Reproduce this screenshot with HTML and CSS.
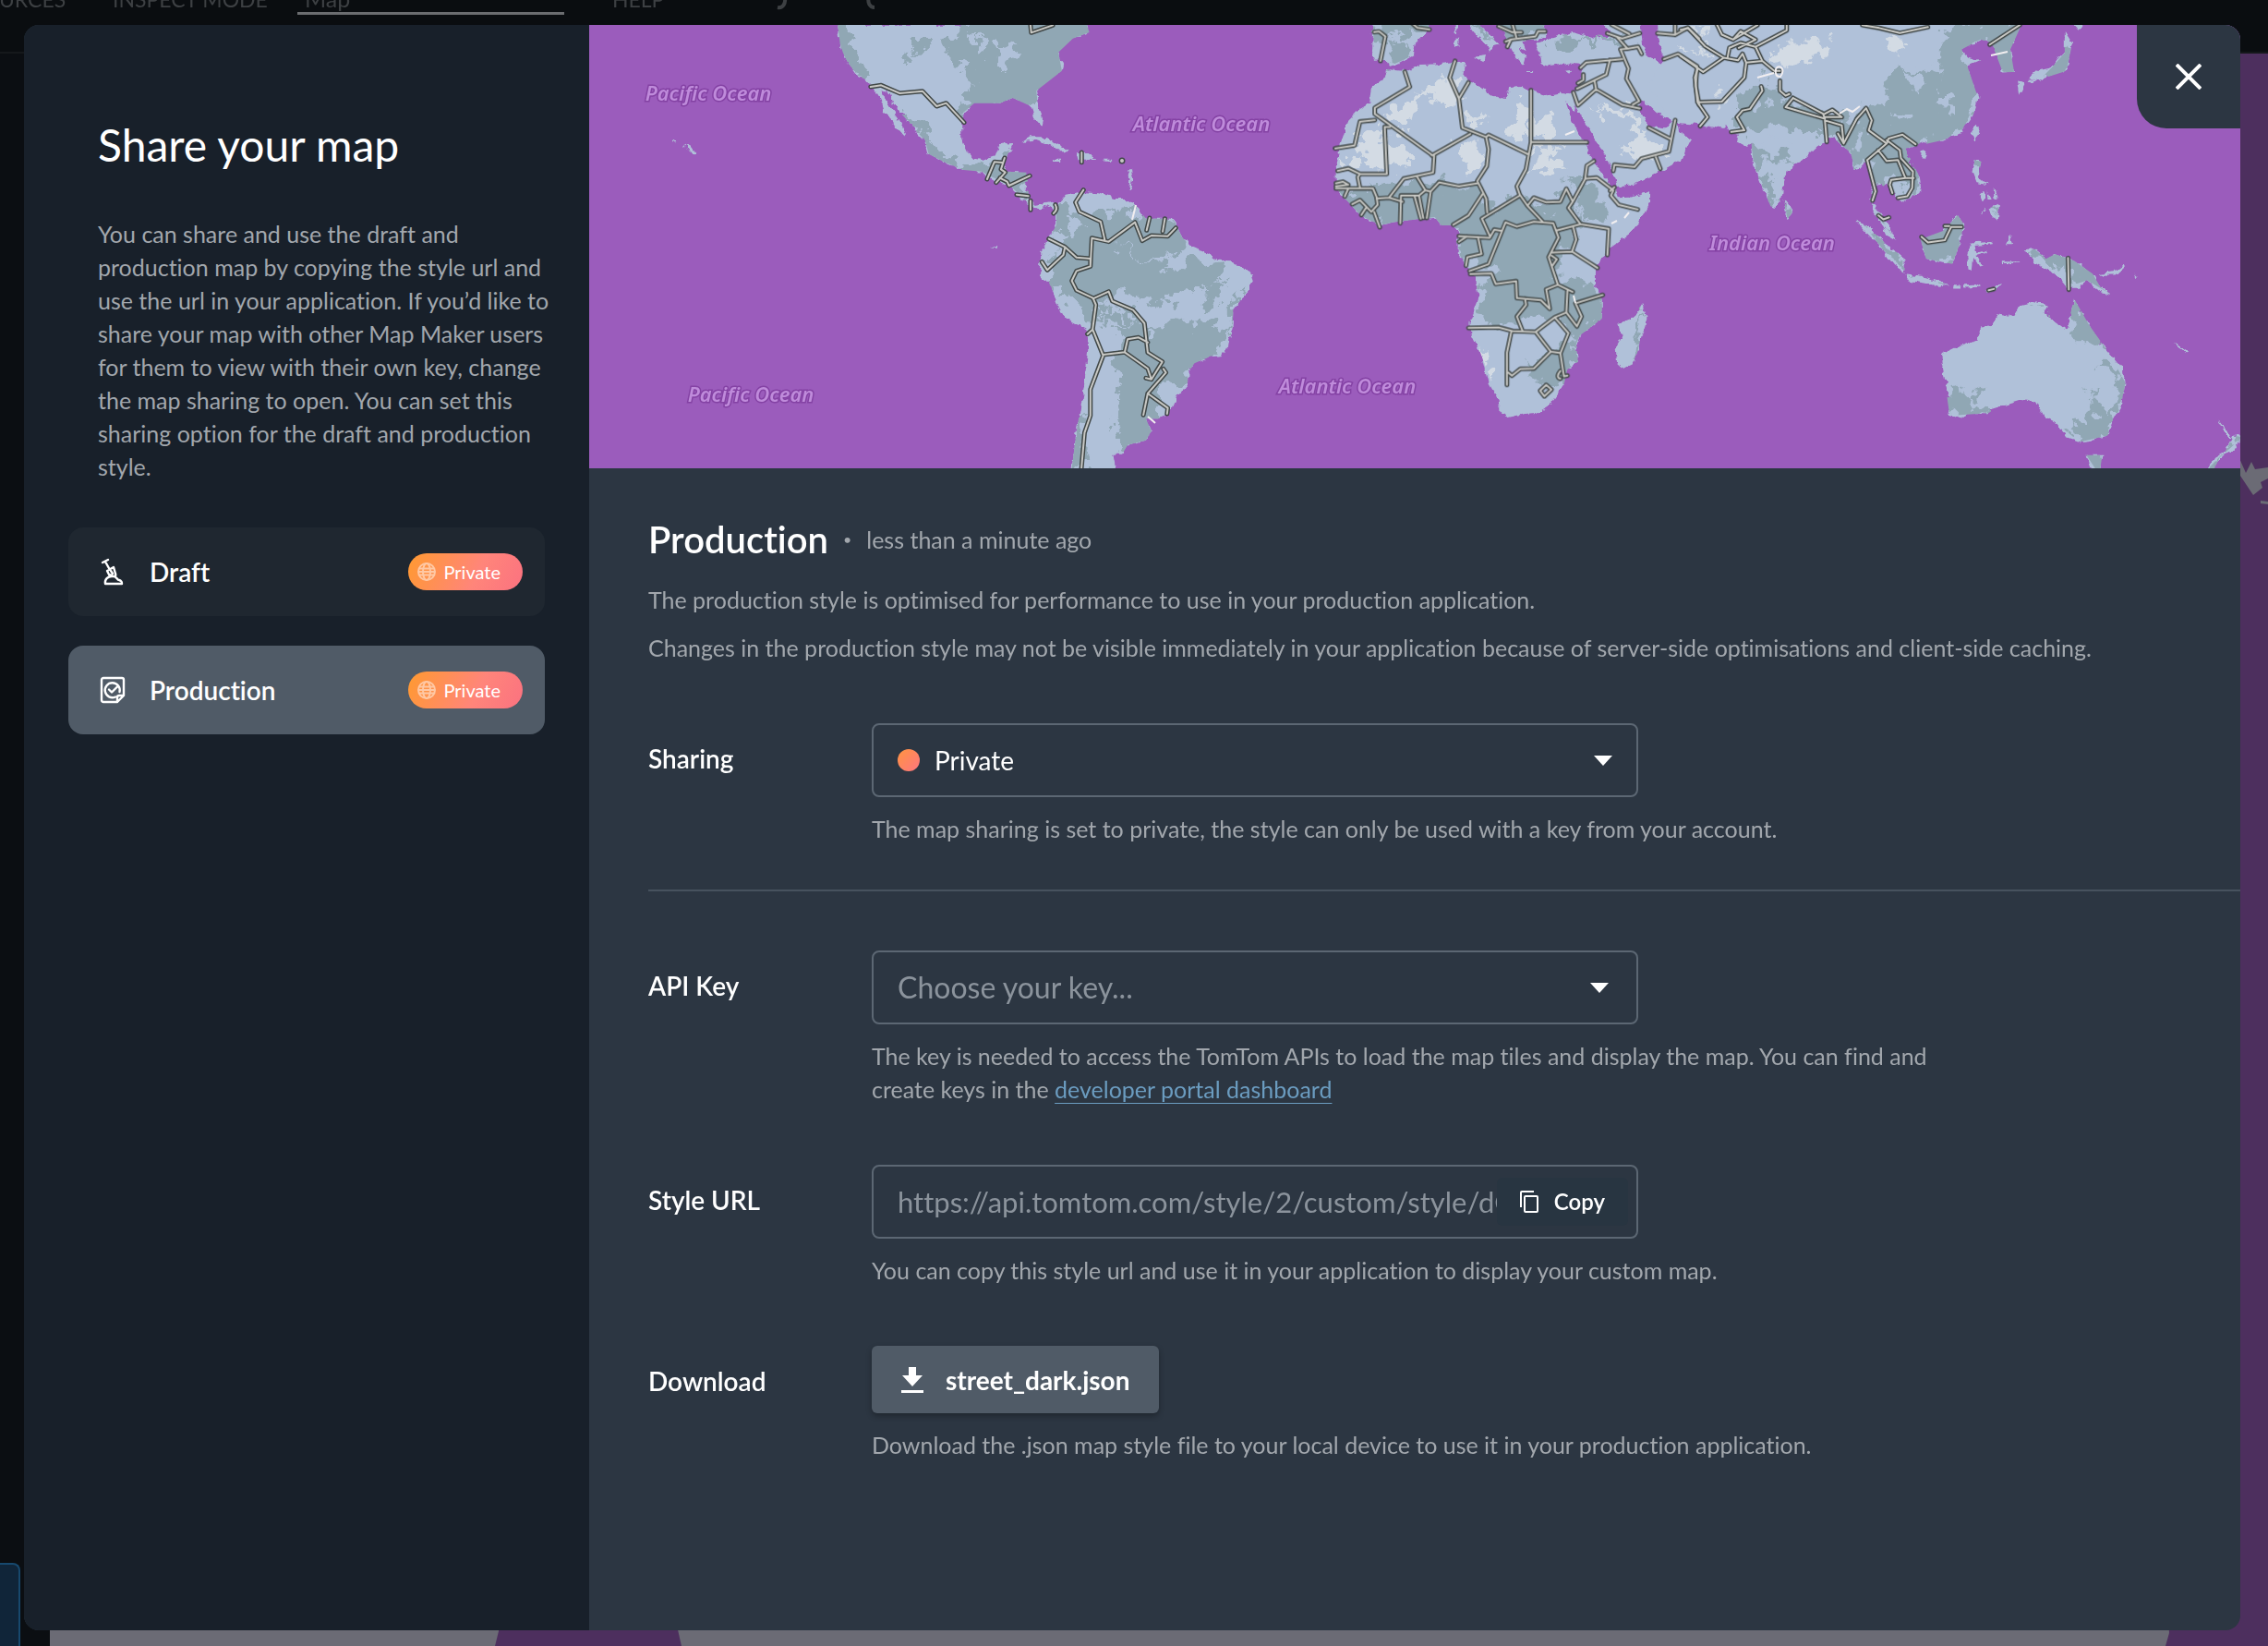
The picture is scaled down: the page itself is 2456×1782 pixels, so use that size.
FILE: index.html
```html
<!DOCTYPE html>
<html lang="en">
<head>
<meta charset="utf-8">
<meta name="viewport" content="width=device-width, initial-scale=1">
<title>Share your map</title>
<link rel="stylesheet" href="styles.css">
</head>
<body>
<div class="app" aria-hidden="true">
  <div class="app-bar">
    <span class="app-item">SOURCES</span>
    <span class="app-item">INSPECT MODE</span>
    <span class="app-search">Map</span>
    <span class="app-item">HELP</span>
    <svg class="app-arrows" width="110" height="24" viewBox="0 0 110 24"><path d="M1 21c6 1 9-4 8-12M100 10c-2 6 1 11 6 11" fill="none" stroke="currentColor" stroke-width="4"/></svg>
  </div>
  <div class="app-body">
    <div class="app-side"><div class="app-tile"></div></div>
    <svg class="app-map" viewBox="54 58 2402 1724" preserveAspectRatio="none">
      <path class="dim-land" d="M54 1700H540V1766L536 1782H54ZM733 1700H2346L2349 1768 2345 1782H738L733 1760Z"/>
      <path class="dim-land" d="M2424 494l8 18 6-12 4 8 14-2v12l-8 4 2 6-10 8-16-24zM2448 542l8 1v3l-8-1z"/>
    </svg>
  </div>
</div>

<div class="overlay">
  <div class="modal" role="dialog" aria-modal="true" aria-labelledby="dialog-title">
    <aside class="sidebar">
      <div class="intro">
        <h1 id="dialog-title">Share your map</h1>
        <p>You can share and use the draft and production map by copying the style url and use the url in your application. If you’d like to share your map with other Map Maker users for them to view with their own key, change the map sharing to open. You can set this sharing option for the draft and production style.</p>
      </div>
      <div class="styles-list">
        <button type="button" class="style-card">
          <svg class="style-icon" viewBox="0 0 28 30"><path d="M3 5l6-3M6 4l5 9M8 14l7-4 2 7c1 3-1 4-4 2l-3-1zM6 28c-1-5 3-8 7-8 6-1 5 4 8 4 3 1 3 2 3 4zM12 14l2 3" /></svg>
          <span class="style-name">Draft</span>
          <span class="badge"><svg viewBox="0 0 20 20"><circle cx="10" cy="10" r="9"/><ellipse cx="10" cy="10" rx="4" ry="9"/><path d="M2 6.500h16M2 13.500h16M1 10h18"/></svg>Private</span>
        </button>
        <button type="button" class="style-card is-active" aria-pressed="true">
          <svg class="style-icon" viewBox="0 0 28 30"><path d="M19 28H4a2 2 0 0 1-2-2V4a2 2 0 0 1 2-2h20a2 2 0 0 1 2 2v17zM19 28v-5a2 2 0 0 1 2-2h5M17 22.500A8 8 0 1 1 21.500 17M10 14.500l3 3 6-6"/></svg>
          <span class="style-name">Production</span>
          <span class="badge"><svg viewBox="0 0 20 20"><circle cx="10" cy="10" r="9"/><ellipse cx="10" cy="10" rx="4" ry="9"/><path d="M2 6.500h16M2 13.500h16M1 10h18"/></svg>Private</span>
        </button>
      </div>
    </aside>

    <main class="content">
      <svg class="preview" viewBox="638 27 1788 480" preserveAspectRatio="xMidYMid slice" role="img" aria-label="Map preview">
        <defs>
          <filter id="rough" x="0" y="0" width="1" height="1"><feTurbulence type="fractalNoise" baseFrequency="0.12" numOctaves="3" seed="4"/><feDisplacementMap in="SourceGraphic" scale="7" xChannelSelector="R" yChannelSelector="G"/></filter>
          <filter id="patchy" x="0" y="0" width="1" height="1"><feTurbulence type="fractalNoise" baseFrequency="0.07" numOctaves="4" seed="9"/><feDisplacementMap in="SourceGraphic" scale="34" xChannelSelector="R" yChannelSelector="G"/></filter>
          <g id="land-shapes">
            <g transform="translate(636 20) scale(.39535 .33333)">
              <path d="M686 20L692 80 700 110 712 140 740 185 765 200 785 230 800 260 812 300 830 320 845 350 870 383 875 375 855 330 830 290 812 250 808 235 830 245 838 275 860 310 880 335 900 365 925 395 935 440 975 465 1030 492 1080 497 1100 520 1130 530 1160 545 1180 580 1215 608 1240 625 1255 608 1285 630 1290 605 1265 598 1230 605 1210 590 1200 560 1205 500 1150 497 1140 480 1150 440 1162 408 1125 412 1115 445 1080 460 1060 455 1040 430 1025 390 1025 340 1030 305 1060 275 1100 268 1130 275 1165 258 1200 268 1215 285 1225 325 1243 347 1247 325 1235 290 1230 235 1265 195 1300 170 1303 150 1290 110 1295 85 1330 65 1375 45 1368 20Z"/>
              <path d="M1192 400L1215 382 1240 382 1275 400 1320 430 1290 430 1265 408 1230 393ZM1340 435L1370 435 1395 455 1345 460ZM1415 458h22v6h-22ZM1275 458h18v7h-18ZM1480 490l10 0 3 30-6 35-5-2 4-30ZM262 410l20 5 16 25-8 2-12-18ZM234 398h9v5h-9ZM1103 746l20-6v6Z"/>
              <path d="M1285 610L1310 575 1355 565 1400 568 1440 585 1470 585 1510 615 1530 650 1605 650 1629 710 1653 740 1702 765 1726 785 1765 787 1794 810 1815 822 1823 850 1815 885 1789 915 1769 945 1767 1010 1755 1060 1736 1095 1702 1100 1663 1120 1646 1150 1644 1185 1619 1220 1600 1270 1566 1300 1530 1300 1545 1340 1530 1370 1480 1385 1465 1415 1440 1415 1450 1480 1325 1480 1340 1340 1360 1200 1375 1040 1365 1010 1310 975 1290 930 1270 870 1240 830 1240 760 1265 715 1285 670Z"/>
            </g>
            <g transform="translate(1240 20) scale(.3827 .33333)">
              <path d="M685 165L740 172 780 150 830 148 880 140 905 145 900 180 912 205 950 225 990 255 1022 258 1030 225 1065 222 1090 235 1140 250 1180 240 1212 245 1218 280 1215 300 1190 270 1205 320 1225 370 1250 410 1252 440 1275 475 1310 530 1330 550 1340 580 1370 578 1432 562 1432 590 1400 660 1370 700 1310 750 1275 810 1275 870 1293 910 1293 975 1230 1030 1220 1055 1225 1115 1195 1140 1185 1190 1150 1250 1110 1280 1070 1285 1022 1297 1002 1275 1000 1240 970 1180 950 1090 925 1030 918 990 943 915 935 840 905 800 885 760 885 690 870 672 838 672 820 645 790 648 700 662 665 672 610 640 570 590 540 550 540 490 550 420 575 330 600 300 635 275 640 225 680 190Z"/>
              <path d="M1410 928L1420 975 1405 1030 1385 1120 1355 1137 1335 1115 1332 1075 1348 1040 1342 990 1375 975 1395 955Z"/>
              <path d="M645 0L800 0 805 35 765 80 760 120 720 145 690 155 680 135 648 137 640 110ZM877 20l9 0-3 35-6-5ZM875 65h12v30h-12ZM905 0L945 20 990 70 1003 85 985 90 975 110 970 90 940 60ZM930 125L962 120 958 142ZM1045 125L1075 130 1070 150ZM1188 173l20-3-8 12ZM1075 168h20v5h-20ZM990 0L1130 0 1135 60 1110 70 1070 75 1078 105 1060 95 1078 130 1050 130 1035 95 1020 60Z"/>
              <path d="M1105 80L1150 65 1210 45 1270 65 1330 58 1300 20 1320 0 1400 0 1405 50 1410 100 1420 120 1470 150 1568 165 1640 200 1640 360 1568 345 1500 330 1450 310 1410 265 1395 268 1400 295 1425 350 1470 358 1500 325 1510 365 1545 395 1520 455 1450 500 1380 540 1335 550 1325 500 1290 420 1260 370 1220 290 1212 240 1235 200 1235 150 1200 145 1150 155 1120 145 1115 110Z"/>
            </g>
            <g transform="translate(1820 0) scale(.40568 .35714)">
              <path d="M-62 50L-60 110 -45 190 -90 260 -20 372 50 378 115 375 130 400 155 405 150 430 175 445 188 430 195 500 215 560 240 625 250 630 270 600 280 520 320 490 365 440 405 415 430 440 455 465 462 515 480 510 500 485 515 560 505 610 535 650 560 690 575 730 550 715 530 670 510 630 520 560 540 555 560 570 590 615 640 580 635 530 600 480 600 450 650 430 700 425 750 400 780 350 795 300 780 250 765 200 800 182 765 170 750 150 800 120 830 130 850 165 860 220 890 218 880 150 890 110 920 50Z"/>
              <path d="M1025 95L1045 130 1030 215 990 225 960 240 930 235 950 215 990 205 1005 180 1025 160ZM1030 50L1080 50 1060 90ZM900 245L920 250 905 285ZM930 240L955 238 940 252ZM790 380L797 390 785 425 778 405ZM640 460L658 455 650 485 638 475ZM785 485L802 490 795 535 820 560 790 555 778 520ZM800 590l10-10 5 20-10 5ZM820 580l10 25-8 0ZM835 570l10 30-8 5ZM825 630L850 620 848 665 830 655ZM800 650l12-20 3 5ZM275 605L300 640 285 665 280 640Z"/>
              <path d="M468 670L500 685 550 740 598 785 598 825 570 805 530 745 500 710ZM600 832L650 840 715 862 690 867 610 850ZM640 725L660 735 700 700 720 680 740 652 755 680 745 740 725 800 690 795 655 785ZM725 866l20 0 0 6-20 0ZM755 866l45-2 0 6-45 2ZM815 885l40-25 0 8-35 22ZM768 820L765 775 775 738 830 733 830 740 785 745 790 765 815 760 812 768 790 775 805 805 797 808 782 780 778 822ZM870 740L880 712 885 740ZM855 793l50 0 0 5-50 0ZM920 760L945 755 975 785 1000 770 1050 790 1100 830 1120 870 1150 893 1120 885 1085 850 1060 870 1030 870 1000 830 950 800 940 780ZM1115 828L1155 824 1180 803 1183 810 1160 833 1115 834ZM1320 1038l36 28-2 5-32-26ZM1210 830l8 8-4 2Z"/>
              <path d="M695 1075L740 1050 790 1030 805 990 835 985 845 950 890 960 905 925 940 915 980 925 970 950 1030 1000 1045 950 1050 905 1070 950 1090 985 1105 1025 1140 1065 1180 1120 1187 1160 1175 1230 1150 1280 1140 1320 1100 1335 1065 1340 1030 1325 1005 1285 970 1265 950 1220 905 1212 825 1240 820 1252 775 1252 750 1270 718 1260 722 1220 705 1150 697 1100ZM1083 1380L1125 1380 1118 1440 1095 1420ZM1475 1320L1500 1325 1480 1360 1440 1385 1420 1430 1400 1430 1425 1385 1455 1365ZM1436 1272l20 28 14 30-8 0Z"/>
            </g>
          </g>
          <clipPath id="land-clip">
            <path transform="translate(636 20) scale(.39535 .33333)" d="M686 20L692 80 700 110 712 140 740 185 765 200 838 275 860 310 880 335 900 365 925 395 935 440 975 465 1030 492 1080 497 1160 545 1215 608 1240 625 1290 605 1210 590 1205 500 1150 497 1140 480 1162 408 1125 412 1115 445 1060 455 1025 390 1030 305 1060 275 1130 275 1165 258 1215 285 1235 290 1230 235 1300 170 1290 110 1330 65 1375 45 1368 20ZM1285 610L1310 575 1355 565 1400 568 1440 585 1470 585 1510 615 1530 650 1605 650 1629 710 1653 740 1702 765 1726 785 1765 787 1815 822 1823 850 1815 885 1789 915 1769 945 1767 1010 1755 1060 1736 1095 1702 1100 1663 1120 1646 1150 1644 1185 1619 1220 1600 1270 1566 1300 1530 1300 1545 1340 1530 1370 1480 1385 1465 1415 1440 1415 1450 1480 1325 1480 1340 1340 1360 1200 1375 1040 1365 1010 1310 975 1290 930 1270 870 1240 830 1240 760 1265 715 1285 670Z"/>
            <path transform="translate(1240 20) scale(.3827 .33333)" d="M685 165L780 150 880 140 905 145 900 180 912 205 950 225 990 255 1022 258 1030 225 1065 222 1140 250 1212 245 1190 270 1225 370 1250 410 1252 440 1275 475 1330 550 1340 580 1432 562 1432 590 1400 660 1310 750 1275 810 1275 870 1293 910 1293 975 1230 1030 1220 1055 1225 1115 1195 1140 1185 1190 1150 1250 1110 1280 1070 1285 1022 1297 1000 1240 950 1090 918 990 943 915 935 840 885 760 885 690 870 672 838 672 820 645 700 662 665 672 610 640 570 590 540 550 550 420 575 330 635 275 640 225ZM1410 928L1420 975 1405 1030 1385 1120 1355 1137 1332 1075 1348 1040 1342 990ZM645 0L800 0 805 35 765 80 760 120 690 155 648 137ZM905 0L945 20 990 70 970 90ZM990 0L1130 0 1135 60 1070 75 1050 130 1020 60ZM1105 80L1210 45 1330 58 1300 0 1405 0 1420 120 1395 268 1425 350 1470 358 1500 335 1545 395 1520 455 1450 500 1380 540 1335 550 1290 420 1212 240 1235 150 1120 145Z"/>
            <path transform="translate(1820 0) scale(.40568 .35714)" d="M-62 50L-60 110 -45 190 -20 372 115 375 155 405 150 430 188 430 195 500 215 560 240 625 250 630 270 600 280 520 365 440 405 415 430 440 455 465 462 515 500 485 515 560 505 610 575 730 510 630 520 560 560 570 590 615 640 580 635 530 600 450 700 425 750 400 780 350 795 300 765 200 750 150 800 120 830 130 860 220 890 218 880 150 920 50ZM1025 95L1045 130 1030 215 960 240 990 205 1025 160ZM785 485L802 490 795 535 780 520ZM825 630L850 620 848 665ZM275 605L300 640 285 665ZM490 680L550 740 598 785 598 825 530 745ZM600 832L715 862 610 850ZM640 725L700 700 740 652 755 680 745 740 725 800 655 785ZM920 760L945 755 975 785 1000 770 1050 790 1100 830 1120 870 1150 893 1085 850 1030 870 950 800ZM695 1075L790 1030 845 950 905 925 980 925 1030 1000 1050 905 1090 985 1140 1065 1187 1160 1175 1230 1140 1320 1065 1340 1005 1285 950 1220 905 1212 820 1252 718 1260ZM1083 1380L1125 1380 1118 1440ZM1475 1320L1500 1325 1440 1385 1420 1430 1400 1430 1455 1365Z"/>
          </clipPath>
          <g id="border-lines">
            <path vector-effect="non-scaling-stroke" transform="translate(636 20) scale(.39535 .33333)" d="M776 222L805 217 856 243 918 236 957 285 983 275 1032 338M1212 0L1216 46 1275 22M1095 522L1115 466 1136 468M1143 453L1133 490 1145 500 1120 533M1130 518L1150 530 1155 543 1212 511M1176 572l32 5M1214 592v30M1282 605q8 15-5 28M1354 435v32M1359 557L1337 597 1348 628 1406 660 1418 722M1378 805L1382 713 1428 725 1500 662 1520 722 1545 705 1590 707 1612 680M1540 648L1532 688M1582 650l-6 42M1264 716L1308 742 1340 776 1378 780 1378 805 1340 820 1327 852 1340 883 1385 908 1393 930 1384 1010 1370 1025M1308 745L1304 768 1260 817 1245 790M1385 910L1428 887 1438 918 1495 947 1526 990 1535 1085 1575 1115 1545 1172 1530 1168M1384 1010L1413 1095 1378 1205 1378 1290 1362 1345 1352 1480M1413 1092L1472 1084 1480 1042 1510 1036 1535 1052M1472 1084L1535 1137 1545 1172M1578 1138L1585 1150 1535 1218 1523 1288M1535 1218L1590 1265 1588 1284"/>
            <circle vector-effect="non-scaling-stroke" cx="1215" cy="174" r="1"/>
            <path vector-effect="non-scaling-stroke" transform="translate(1240 20) scale(.3827 .33333)" d="M648 44L662 42 680 58 666 138M740 0L770 30 805 36M735 173L749 222 650 290 650 310 808 440 812 445 920 375M650 330L608 335 593 412 538 422M693 352L678 352 684 505 608 505 575 487 545 495M608 505L602 515 608 550M540 552L645 552 655 580 658 605 640 628 608 590 586 603M540 535L560 530 575 540 540 545M575 552L565 578M625 615L612 638M648 628L664 678M655 585L690 582 728 595M690 582L732 520 815 500 818 445M770 515L793 558 808 562 832 532 888 545 940 535M808 562L797 648M762 575L780 650M775 575L787 648M722 665L724 575 775 575 793 558M877 138L862 192 888 260 898 355 965 385 972 378 1082 440M915 208L888 260M1092 233V402L1078 490 1052 545 1060 572 1082 608 1125 660M1092 402H1250M965 385L972 425 967 480 940 528 965 585 968 630M955 570L915 640 872 670M1060 575L953 650 975 705M888 707L975 712 988 686 1010 690M910 708L888 725M942 710L952 765 912 775 908 803M1020 662L972 798 918 820M1020 662L1052 676 1100 660 1155 665 1170 712 1142 775 1168 865 1135 880 1145 943 1120 915 1052 908 1050 853 992 862 980 828 920 830M1082 608L1100 582 1135 597 1175 595 1192 553 1210 595 1245 522 1250 478 1270 463M1245 520L1278 517 1325 558 1318 575 1340 605 1394 620M1328 548l-12 12M1210 595L1198 615 1232 668 1165 688M1232 668L1312 683 1308 768M1212 680L1220 718 1208 757 1280 810M1208 757L1150 760M1150 770l15 12-12 20M1168 865L1210 888M1195 885L1192 955 1222 1000 1235 968 1218 925 1295 898M1192 955L1160 970 1105 1018 1040 1015 1000 1003 915 1005M1075 910L1078 930 1052 968 1068 1015M1160 972L1198 1022 1175 1088 1185 1162 1195 1160M1105 1018L1148 1082 1172 1086M1148 1082L1100 1137 1062 1138 1038 1160 1028 1150M1036 1018L1024 1085V1190M1135 1190l15 15-20 22-12-18zM1175 1145q-14 20 0 25M1020 75L1035 68 1105 58 1112 42 1132 42M1035 68L1025 92M1000 25L1040 45 1065 45M1040 20L1050 60M1232 160L1248 143 1350 132M1315 135L1305 182 1222 228M1272 205L1276 230 1225 282 1212 240M1276 230L1350 280 1400 292M1240 182l0 18-15 10M1308 48L1350 65 1400 48M1320 20L1370 50M1335 60L1365 98 1345 100 1368 162 1362 195 1398 268 1380 280M1365 98L1395 92 1405 115M1425 355L1485 390M1500 330L1482 432 1405 455 1385 482 1328 475 1325 495M1445 450L1458 488M1450 48L1500 53V20M1500 53L1535 30 1568 65M1468 132L1508 115 1562 155 1558 220 1568 280"/>
            <path vector-effect="non-scaling-stroke" transform="translate(1820 0) scale(.40568 .35714)" d="M0 90L20 85 65 140 115 175 153 183 165 163 175 190 218 185 250 215 265 215M0 170L60 218 115 175M45 210L38 235 45 310 110 308 170 235 175 190M45 310L72 355 52 382M95 70L110 105 140 120 205 76M140 120L160 95 200 120 155 145M125 175L130 145 160 130 200 142 283 92 283 70M200 142L218 185M265 245l0 30 15 15 10-5M215 262L218 275 185 330 165 335 150 355 170 395 135 400M300 297L380 345 385 360 280 325 300 297M385 345L405 333 430 355 385 355M385 365L430 380 435 435 420 405M385 365L390 430M435 435L470 360 495 328 510 365 502 395 550 435 498 485 520 580 512 608M550 435L555 420 592 408 627 437M550 425L585 455 588 480 620 520 618 570 605 595 580 600M527 455L550 488 580 485 600 540 622 540M600 540L562 545 558 560 565 585M485 76L530 85 585 100 660 82M905 76L825 135M528 653l13 12 15-6M643 718L660 735 705 728 722 688 750 688M705 685l12 0M1034 782L1036 878M822 880l14-4"/>
          </g>
        </defs>
        <rect class="ocean" x="638" y="-973" width="1788" height="2480"/>
        <use href="#land-shapes" class="land" filter="url(#rough)"/>
        <g clip-path="url(#land-clip)">
          <g class="forest" filter="url(#patchy)">
            <path transform="translate(636 20) scale(.39535 .33333)" d="M670 0L715 0 725 80 765 160 740 200 690 110ZM1020 0L1400 0 1400 60 1320 180 1240 240 1240 280 1200 280 1130 290 1020 320 1020 280 1045 240 1040 180 1060 150 985 130 985 70 1020 60ZM890 60h40l-10 80h-35ZM870 330L915 340 935 400 960 430 1030 480 1120 490 1150 400 1180 400 1210 590 1000 500 930 460 905 380ZM1280 600L1310 600 1340 650 1300 720 1280 700ZM1310 640L1400 630 1480 620 1540 640 1640 670 1640 750 1560 780 1640 860 1600 940 1520 920 1470 870 1430 900 1395 990 1330 930 1290 880 1255 790 1320 720ZM1500 930L1400 940 1410 990 1500 980ZM1640 780l110 20-20 50-60 30-60-40ZM1700 860l40 0-10 60-40 20ZM1540 1000L1680 980 1760 1010 1720 1090 1650 1120 1650 1200 1560 1190 1510 1100 1450 1000 1500 980ZM1440 1060L1510 1060 1560 1150 1560 1290 1590 1300 1560 1390 1470 1400 1440 1300 1460 1200ZM1320 1300l40-20-5 190h-40ZM1790 870l-30 80 0 90 20-60Z"/>
            <path transform="translate(1240 20) scale(.3827 .33333)" d="M550 560L680 530 830 530 900 560 950 540 980 620 1060 580 1140 620 1200 560 1240 640 1240 680 1180 760 1160 860 1230 850 1290 900 1300 980 1220 1040 1190 1000 1100 960 1060 1000 960 990 940 860 1000 840 960 790 890 790 880 690 800 680 560 660ZM1200 520L1270 540 1310 640 1250 640ZM1090 1110L1200 1060 1230 1120 1180 1210 1110 1180ZM1200 1010l30 0-10 60-20-10ZM1420 940L1410 1040 1380 1120 1390 1020ZM650 0L800 0 800 40 740 50 650 90ZM690 80l60 0-10 60-40 0ZM990 0L1130 0 1130 60 1030 60ZM900 0L950 20 990 80ZM1170 60L1230 50 1230 110 1180 110ZM1240 60L1340 60 1380 80 1240 70Z"/>
            <path transform="translate(1820 0) scale(.40568 .35714)" d="M170 270L240 240 290 320 390 350 470 350 500 320 540 330 545 270 580 200 690 230 700 120 760 70 920 50 900 230 850 210 820 130 750 150 790 250 790 350 740 410 650 440 610 460 640 530 630 600 580 540 520 550 500 480 460 520 430 440 380 400 300 400 290 380 220 380 190 400 150 400 150 330ZM190 430L230 450 290 450 290 500 240 470 210 500 240 560 260 620 240 630 190 500ZM1020 140L1050 140 1020 240 960 220ZM480 660L600 800 600 830 520 750ZM560 690L580 740 500 620ZM640 720L780 620 740 810 650 790ZM600 830L700 850 700 870ZM920 760L1150 900 1150 780 960 760ZM930 900L990 920 960 950 930 940ZM1050 900L1100 960 1130 1060 1070 1030 1045 980ZM1100 1100h60l10 40ZM720 1180L750 1190 820 1250 780 1270 720 1280ZM770 1180h50v25h-50ZM1170 1100L1200 1160 1150 1290 1130 1350 1040 1330 1030 1290 1100 1280 1090 1200 1120 1200 1130 1270 1160 1210ZM1080 1370h50v80h-50ZM1480 1320l20 0-20 40-50 60-30 20ZM780 480l30 0 10 60ZM820 620l40 0-10 50ZM270 620l30 0-10 50Z"/>
          </g>
          <g class="land" filter="url(#patchy)">
            <path transform="translate(636 20) scale(.39535 .33333)" d="M1065 65l25-5 5 35-20 10ZM1120 90l40-10 30 20-40 30-20 60-15-10 10-60ZM1040 40l30 0 0 20-30 0ZM1310 650l30 0 20 20-30 30ZM1460 740l40 40 68-10 0 12-80 0ZM1410 900l30 30 40 20 0 20-50-20ZM1520 1010l30 10 0 30-20 0Z"/>
            <path transform="translate(1820 0) scale(.40568 .35714)" d="M200 300l30 0 0 30-30 0ZM600 210l40 20-10 50-20-20ZM690 280l30 0 10 60-30 0ZM560 330l50 10 0 20-40 0ZM210 430l40-20 50 30-60 20ZM470 400l20 0 0 60-20 0Z"/>
          </g>
          <g class="desert" filter="url(#patchy)">
            <path transform="translate(1240 20) scale(.3827 .33333)" d="M840 195L890 200 890 300 860 290 820 250 770 260 750 350 720 370 670 300 730 280 790 230ZM620 370L660 340 690 420 760 440 760 480 620 470 590 440ZM870 400L960 420 970 490 910 490 880 430ZM910 310l60 20-50 20ZM1050 270L1090 290 1080 400 1020 360 1050 330ZM1100 300L1150 340 1170 400 1100 380ZM1100 410L1160 410 1150 450 1190 480 1090 500ZM1260 300L1340 280 1390 310 1410 400 1480 400 1480 440 1400 470 1340 430 1390 390 1370 320ZM540 440l40 20-20 30ZM1500 90l40 5-20 10ZM950 1080l15 0 20 100-15 0Z"/>
            <path transform="translate(1820 0) scale(.40568 .35714)" d="M260 140L310 120 400 125 360 180 300 195 250 180ZM545 110L605 120 600 150 550 140ZM0 80L60 80 70 110ZM85 285h25v20h-25ZM0 140l80 20 0 10Z"/>
          </g>
        </g>
        <use href="#border-lines" class="border-case"/>
        <use href="#border-lines" class="border-core"/>
        <g class="disputed" fill="none">
          <path d="M1903 84l18-5M1924 73c7-3 8 5 4 10-6 1-6-7-4-10M1992 123l8-5 6 3 8-6M2156 60l18-4M1695 146l10-4M1745 242l6-3M1759 236l5-6M1230 222l-4 16M1243 451l8 7M1704 320l2 8"/>
        </g>
        <g class="sea-label">
          <text x="767" y="109">Pacific Ocean</text>
          <text x="1301" y="142">Atlantic Ocean</text>
          <text x="1919" y="271">Indian Ocean</text>
          <text x="1459" y="426">Atlantic Ocean</text>
          <text x="813" y="435">Pacific Ocean</text>
        </g>
      </svg>
      <button type="button" class="close" aria-label="Close"><svg viewBox="0 0 28 28"><path d="M1 1l26 26M27 1L1 27"/></svg></button>

      <section class="details">
        <header class="details-head">
          <h2>Production</h2><span class="dot-sep">•</span><span>less than a minute ago</span>
        </header>
        <div class="summary">
          <p>The production style is optimised for performance to use in your production application.</p>
          <p>Changes in the production style may not be visible immediately in your application because of server-side optimisations and client-side caching.</p>
        </div>

        <form class="form">
          <div class="row">
            <label for="sharing">Sharing</label>
            <div class="field">
              <div class="control">
                <span class="status-dot"></span>
                <select id="sharing"><option>Private</option><option>Open</option></select>
                <svg class="caret caret-end" viewBox="0 0 20 11"><path d="M0 0h20L10 11z"/></svg>
              </div>
              <p>The map sharing is set to private, the style can only be used with a key from your account.</p>
            </div>
          </div>
          <hr>
          <div class="row">
            <label for="api-key">API Key</label>
            <div class="field">
              <div class="control">
                <select id="api-key" class="is-empty"><option>Choose your key...</option></select>
                <svg class="caret" viewBox="0 0 20 11"><path d="M0 0h20L10 11z"/></svg>
              </div>
              <p>The key is needed to access the TomTom APIs to load the map tiles and display the map. You can find and create keys in the <a href="#dashboard">developer portal dashboard</a></p>
            </div>
          </div>
          <div class="row">
            <label for="style-url">Style URL</label>
            <div class="field">
              <div class="control control-url">
                <input id="style-url" type="text" readonly value="https://api.tomtom.com/style/2/custom/style/dG9tdG9tQEBA">
                <button type="button" class="copy"><svg viewBox="0 0 20 24"><path d="M1 18V2a1 1 0 0 1 1-1h13M6 6h12a1 1 0 0 1 1 1v15a1 1 0 0 1-1 1H6a1 1 0 0 1-1-1V7a1 1 0 0 1 1-1z"/></svg>Copy</button>
              </div>
              <p>You can copy this style url and use it in your application to display your custom map.</p>
            </div>
          </div>
          <div class="row">
            <label for="download">Download</label>
            <div class="field">
              <button type="button" id="download" class="download"><svg viewBox="0 0 24 28"><path d="M8 0h8v9h7L12 21 1 9h7zM0 25h24v3H0z"/></svg>street_dark.json</button>
              <p>Download the .json map style file to your local device to use it in your production application.</p>
            </div>
          </div>
        </form>
      </section>
    </main>
  </div>
</div>
</body>
</html>
```
FILE: styles.css
```css
* { box-sizing: border-box; }

body {
  margin: 0;
  min-height: 100vh;
  background: #0a0d10;
  color: #a2a7ad;
  font: 400 25px/36px Lato, "Liberation Sans", sans-serif;
  font-variant-ligatures: none;
}

h1, h2, p { margin: 0; }
button, select, input { font: inherit; color: inherit; }
button { border: 0; padding: 0; cursor: pointer; }

/* Editor behind the dialog */
.app {
  position: fixed;
  inset: 0;
  display: flex;
  flex-direction: column;
  overflow: hidden;
}
.app-bar {
  display: flex;
  align-items: center;
  flex: none;
  height: 74px;
  margin-top: -16px;
  padding: 0 0 42px;
  border-bottom: 2px solid #15181b;
  color: #3d4043;
}
.app-item { font-size: 23px; line-height: 30px; }
.app-item:first-child { width: 122px; margin-left: -32px; margin-right: 32px; }
.app-search {
  width: 289px;
  margin: 0 52px 0 32px;
  padding-left: 8px;
  border-bottom: 3px solid #6b6d70;
  line-height: 30px;
}
.app-arrows { margin-left: 122px; }
.app-body { display: flex; flex: 1; }
.app-side { display: flex; align-items: flex-end; width: 54px; background: #0b0e12; }
.app-tile {
  width: 22px;
  height: 90px;
  border: 2px solid #17496e;
  border-width: 2px 2px 0 0;
  border-top-right-radius: 8px;
  background: #102539;
}
.app-map { flex: 1; width: 0; height: auto; background: #4d2f5e; }
.dim-land { fill: #6b6b75; }

/* Dialog */
.overlay {
  position: relative;
  display: grid;
  min-height: 100vh;
  padding: 27px 30px 17px 26px;
}
.modal {
  display: grid;
  grid-template-columns: 612px 1fr;
  overflow: hidden;
  border-radius: 16px;
  background: #2c3642;
}
.sidebar {
  display: flex;
  flex-direction: column;
  gap: 48px;
  padding: 100px 48px 48px;
  background: #18202a;
}
.intro {
  display: grid;
  gap: 48px;
  margin-right: -16px;
  padding-left: 32px;
}
h1 {
  color: #fff;
  font-size: 48px;
  font-weight: 400;
  line-height: 60px;
}
.styles-list { display: grid; gap: 32px; }
.style-card {
  display: flex;
  align-items: center;
  height: 96px;
  padding: 0 24px 0 34px;
  border-radius: 16px;
  background: #1f2730;
  color: #fff;
}
.style-card.is-active { background: #505b67; }
.style-icon {
  width: 28px;
  height: 30px;
  fill: none;
  stroke: #fff;
  stroke-width: 2.4;
  stroke-linecap: round;
  stroke-linejoin: round;
}
.style-name {
  flex: 1;
  padding-left: 26px;
  font-size: 28px;
  font-weight: 600;
  text-align: left;
}
.badge {
  display: flex;
  align-items: center;
  gap: 9px;
  height: 40px;
  padding: 0 24px 0 10px;
  border-radius: 20px;
  background: linear-gradient(115deg, #ff9836 5%, #ff857a 60%, #fb7280);
  font-size: 20px;
}
.badge svg {
  width: 20px;
  height: 20px;
  fill: none;
  stroke: #ffc8a4;
  stroke-width: 2;
}

.content { position: relative; }
.preview { display: block; width: 100%; height: 480px; }
.ocean { fill: #9b5cbc; }
.land { fill: #b0c1d9; }
.forest { fill: #90a7b4; }
.desert { fill: #d3dbe4; }
.border-case, .border-core { fill: none; stroke-linejoin: round; stroke-linecap: round; }
.border-case { stroke: #414848; stroke-width: 5; }
.border-core { stroke: #c8c8c4; stroke-width: 2; }
.disputed { stroke: #f1eef0; stroke-width: 2; }
.sea-label {
  fill: #bf8bdb;
  stroke: #8442a4;
  stroke-width: 3;
  paint-order: stroke;
  font: italic 600 22px "Noto Sans", sans-serif;
  text-anchor: middle;
}
.close {
  position: absolute;
  top: 0;
  right: 0;
  display: grid;
  place-items: center;
  width: 112px;
  height: 112px;
  border-bottom-left-radius: 32px;
  background: #2c3642;
}
.close svg { width: 28px; height: 28px; stroke: #fff; stroke-width: 4; }

.details { padding: 53px 0 48px 64px; }
.details-head {
  display: flex;
  align-items: center;
  gap: 16px;
  margin-bottom: 23px;
}
h2 {
  color: #fff;
  font-size: 40px;
  font-weight: 600;
  line-height: 48px;
}
.dot-sep { font-size: 16px; }
.summary { display: grid; gap: 16px; }
.form {
  display: flex;
  flex-direction: column;
  gap: 64px;
  margin-top: 64px;
}
hr {
  width: 100%;
  height: 2px;
  margin: -16px 0 0;
  border: 0;
  background: #47525e;
}
.row { display: grid; grid-template-columns: 242px minmax(0, 1170px); }
.row label {
  color: #fff;
  font-size: 28px;
  font-weight: 600;
  line-height: 76px;
}
.field { display: grid; gap: 16px; justify-items: start; }
.control {
  display: flex;
  align-items: center;
  width: 830px;
  max-width: 100%;
  height: 80px;
  padding: 0 26px;
  border: 2px solid #5c6773;
  border-radius: 8px;
}
.control select, .control input {
  flex: 1;
  width: 0;
  height: 76px;
  padding: 0;
  border: 0;
  outline: 0;
  background: transparent;
  appearance: none;
}
#sharing { padding-left: 16px; color: #fff; font-size: 28px; }
.control .is-empty { color: #8b939c; font-size: 32px; }
.control input { color: #8b939c; font-size: 31px; }
.status-dot {
  width: 24px;
  height: 24px;
  border-radius: 50%;
  background: linear-gradient(135deg, #ff9440, #ff7680);
}
.caret { width: 20px; height: 11px; margin-right: 4px; fill: #fff; pointer-events: none; }
.caret-end { margin-right: 0; }
.control-url { padding-right: 9px; }
.copy {
  display: flex;
  align-items: center;
  gap: 17px;
  height: 52px;
  padding: 0 25px;
  border-radius: 6px;
  background: #283541;
  color: #fff;
  font-size: 24px;
  font-weight: 600;
}
.copy svg { width: 20px; height: 24px; fill: none; stroke: #fff; stroke-width: 2; }
a { color: #6b9cc0; text-decoration: underline; text-decoration-thickness: 1px; text-underline-offset: 5px; }
.download {
  display: flex;
  align-items: center;
  gap: 24px;
  height: 73px;
  padding: 0 32px;
  border-radius: 6px;
  background: #505b67;
  box-shadow: 0 3px 6px rgba(0, 0, 0, .3);
  color: #fff;
  font-size: 28px;
  font-weight: 700;
}
.download svg { width: 24px; height: 28px; fill: #fff; }
```
